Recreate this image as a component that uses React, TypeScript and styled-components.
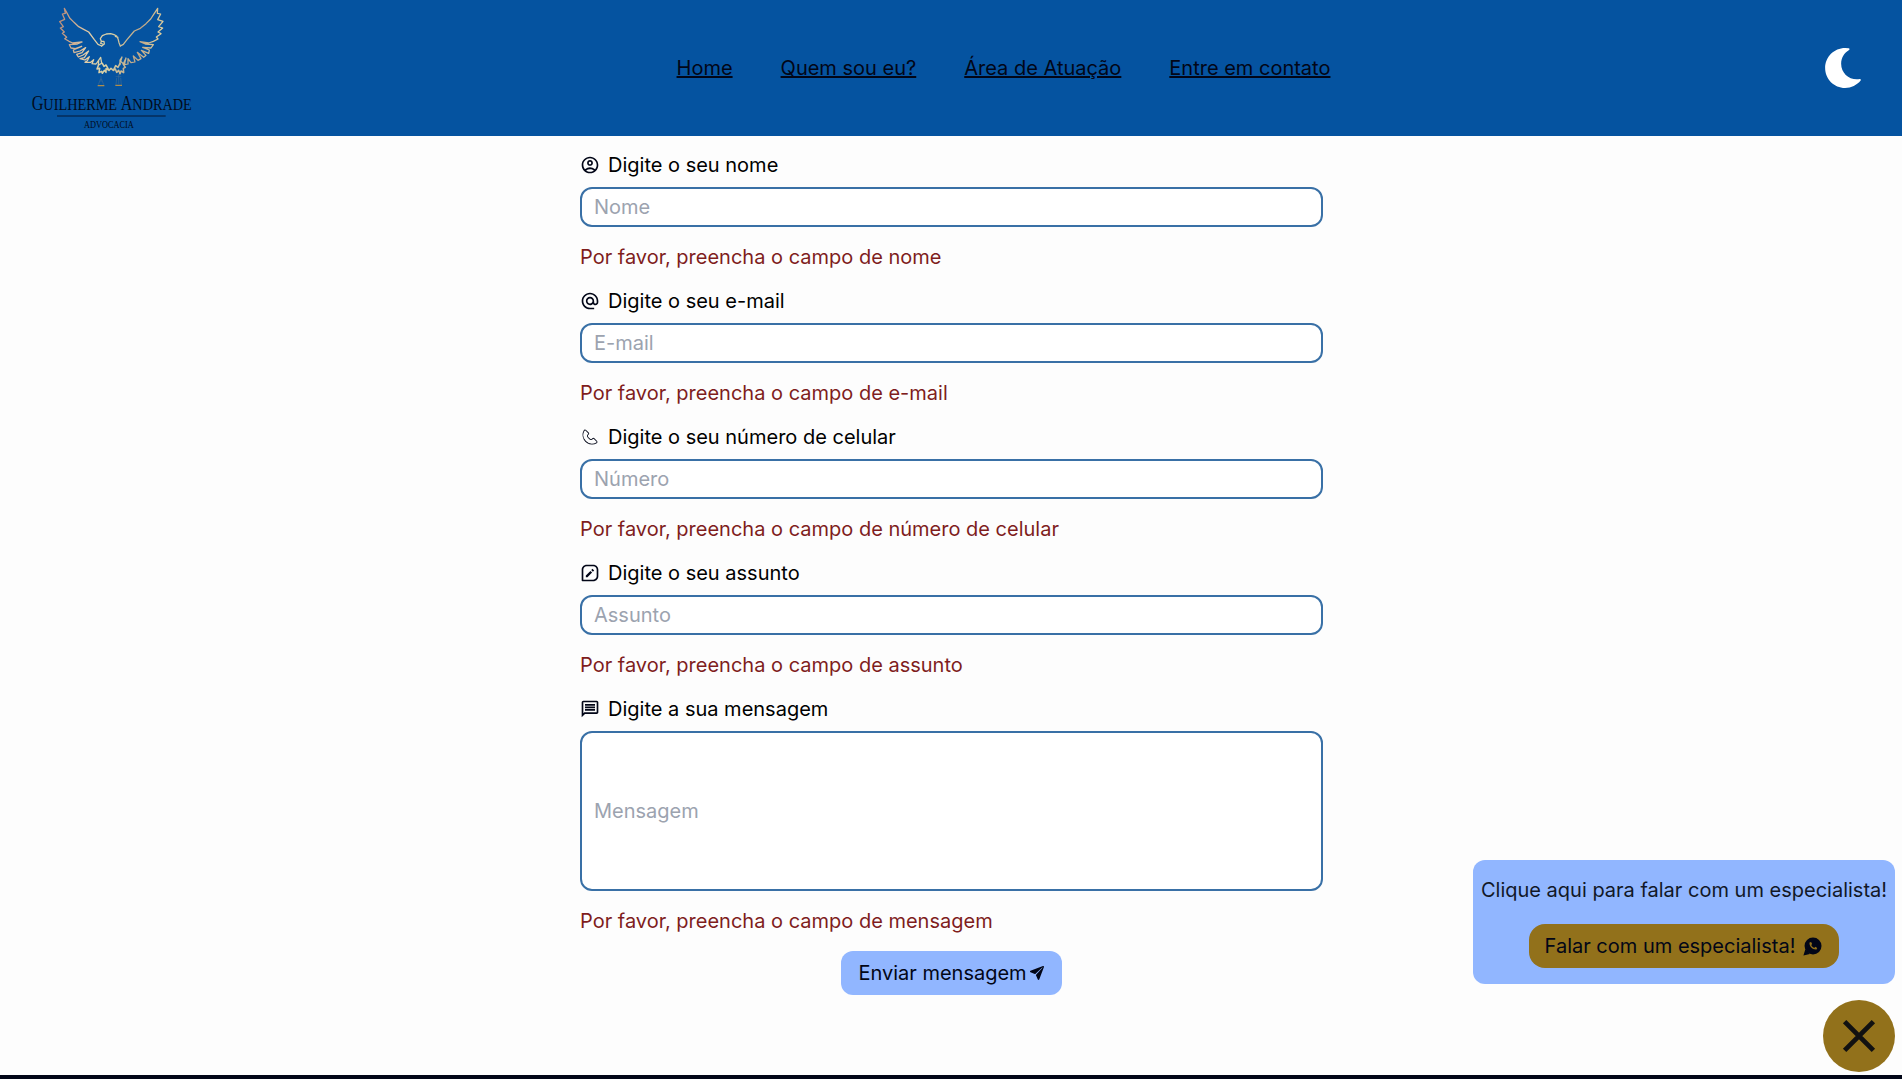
import React from "react";
import type { ComponentType } from "react";
import styled, { createGlobalStyle } from "styled-components";
import {
  MdOutlineAccountCircle,
  MdAlternateEmail,
  MdOutlineMessage,
} from "react-icons/md";
import { CiPhone } from "react-icons/ci";
import { BiMessageSquareEdit } from "react-icons/bi";
import { FaMoon } from "react-icons/fa";
import { IoPaperPlane } from "react-icons/io5";

const colors = {
  primary: "#0553a0",
  border: "#3970a6",
  light: "#91b6ff",
  gold: "#92711b",
  ink: "#020617",
  error: "#7f1d1d",
  placeholder: "#9ca3af",
  page: "#fdfdfd",
};

const GlobalStyle = createGlobalStyle`
  *, *::before, *::after { box-sizing: border-box; }
  html, body { height: 100%; }
  body {
    margin: 0;
    overflow: hidden;
    background: ${colors.page};
    color: #000;
    font-family: Inter, sans-serif;
    font-size: 20px;
    line-height: 28px;
  }
  button, input { font: inherit; color: inherit; }
`;

const Page = styled.div`
  display: flex;
  flex-direction: column;
  height: 1079px;
`;

const Header = styled.header`
  display: flex;
  align-items: center;
  justify-content: space-between;
  flex: none;
  height: 136px;
  padding: 0 31px 0 32px;
  background: ${colors.primary};
`;

const LogoArt = styled.svg`
  display: block;
  width: 160px;
  height: 136px;
  overflow: visible;
`;

const Nav = styled.nav`
  display: flex;
  gap: 48px;
`;

const NavLink = styled.a`
  color: ${colors.ink};
  text-decoration: underline;
`;

const ThemeButton = styled.button`
  display: flex;
  align-items: center;
  justify-content: center;
  width: 56px;
  height: 56px;
  padding: 0;
  border: 0;
  background: none;
  color: #fff;
  font-size: 40px;
`;

const Main = styled.main`
  flex: 1;
  padding-top: 15px;
`;

const Form = styled.form`
  display: flex;
  flex-direction: column;
  gap: 16px;
  width: 743px;
  margin-left: 580px;
`;

const Field = styled.div`
  display: flex;
  flex-direction: column;
  gap: 8px;
`;

const Label = styled.label`
  display: flex;
  align-items: center;
  gap: 8px;

  svg {
    width: 20px;
    height: 20px;
    color: ${colors.ink};
  }
`;

const Input = styled.input<{ $tall?: boolean }>`
  width: 100%;
  height: ${(p) => (p.$tall ? 160 : 40)}px;
  padding: 0 12px;
  border: 2px solid ${colors.border};
  border-radius: 12px;
  outline: 0;
  background: #fff;

  &::placeholder {
    color: ${colors.placeholder};
    opacity: 1;
  }
`;

const ErrorText = styled.p`
  margin: 8px 0 0;
  color: ${colors.error};
`;

const Submit = styled.button`
  display: flex;
  align-items: center;
  justify-content: center;
  align-self: center;
  width: 221px;
  height: 44px;
  padding: 0;
  border: 0;
  border-radius: 12px;
  background: ${colors.light};
  color: ${colors.ink};
  gap: 2px;

  svg {
    width: 16px;
    height: 16px;
  }
`;

const Footer = styled.footer`
  flex: none;
  height: 4px;
  background: ${colors.ink};
`;

const Floating = styled.aside`
  position: fixed;
  right: 7px;
  bottom: 7px;
  display: flex;
  flex-direction: column;
  align-items: flex-end;
  gap: 16px;
`;

const Card = styled.div`
  display: flex;
  flex-direction: column;
  align-items: center;
  gap: 20px;
  width: 422px;
  height: 124px;
  padding-top: 16px;
  border-radius: 12px;
  background: ${colors.light};
  color: #111827;
  white-space: nowrap;
`;

const Specialist = styled.button`
  display: flex;
  align-items: center;
  justify-content: center;
  gap: 7px;
  width: 310px;
  height: 44px;
  padding: 0;
  border: 0;
  border-radius: 16px;
  background: ${colors.gold};
  color: ${colors.ink};
`;

const WhatsappIcon = styled.svg`
  width: 21px;
  height: 21px;
`;

const Close = styled.button`
  display: flex;
  align-items: center;
  justify-content: center;
  width: 72px;
  height: 72px;
  padding: 0;
  border: 0;
  border-radius: 50%;
  background: ${colors.gold};
  color: #111;
`;

const leftWing =
  "M305 138 L294 133 L283 119 L266 96 L251 88 L236 80 L222 67 L209 54 L202 41 L193 25 L196 40 L187 42 L194 58 L179 65 L190 80 L181 84 L193 96 L187 100 L200 112 L194 116 L207 124 L218 129 L246 126 L232 132 L208 134 L213 144 L226 146 L245 139 L220 150 L222 158 L240 153 L257 143 L246 158 L230 163 L235 171 L249 165 L266 153 L253 173 L240 176 L255 180 L268 170 L262 182 L255 187 L272 187 L281 179 L276 191 L288 192 L302 172 L305 190 L295 195 L296 182";

const rightWing =
  "M361 138 L370 133 L381 119 L403 93 L421 85 L438 71 L452 57 L461 43 L473 25 L472 40 L482 42 L473 59 L489 64 L476 80 L488 84 L474 96 L483 101 L469 111 L474 117 L460 124 L446 129 L420 125 L436 132 L460 134 L453 144 L428 142 L448 150 L446 160 L424 151 L438 166 L431 172 L412 157 L423 176 L414 181 L400 168 L405 186 L393 188 L384 176 L384 192 L373 194 L378 174 L370 191 L362 184 L366 171 L360 180 L360 194";

const head =
  "M305 138 L313 132 L312 124 L304 124 L302 130 L308 132 M304 124 L301 116 L307 107 L319 102 L332 101 L342 104 L350 108 L354 116 L357 128 L361 138 M346 109 L354 112";

const claws =
  "M296 194 L291 207 L299 205 L297 218 L305 214 L307 220 L313 211 L318 217 L318 206 L327 211 L318 195 L312 199 L307 190 M327 211 L333 205 L340 211 L347 197 L354 202 L360 190 M340 211 L346 207 L350 217 L356 211 L360 221 L363 213 L371 218 L370 205 L376 202 L370 193";

function Logo() {
  return (
    <LogoArt viewBox="96 0 480 408" role="img">
      <defs>
        <linearGradient id="foil" gradientUnits="userSpaceOnUse" x1="178" y1="60" x2="490" y2="110">
          <stop offset="0" stopColor="#b98c79" />
          <stop offset=".3" stopColor="#e3cda9" />
          <stop offset=".5" stopColor="#d8d1a6" />
          <stop offset=".78" stopColor="#bda587" />
          <stop offset="1" stopColor="#e6d6a2" />
        </linearGradient>
      </defs>
      <g fill="none" stroke="url(#foil)" strokeWidth="3.8" strokeLinejoin="round" strokeLinecap="round">
        <path d={leftWing} />
        <path d={rightWing} />
        <path d={head} />
        <path d={claws} strokeWidth="4.6" />
      </g>
      <g fill="none">
        <path
          d="M303 228 V246 M302 236 L295 254 M304 236 L311 254 M356 222 V252 M347 230 H364 M350 234 L348 254 M362 234 L364 254"
          stroke="#4a7093"
          strokeWidth="1.6"
        />
        <path d="M293 257 H313 M346 256 H366" stroke="#b08d4b" strokeWidth="4" />
      </g>
      <g fill="#020c1c" fontFamily="'Liberation Serif', serif">
        <text transform="translate(95 330) scale(.809 1)" fontSize="53">
          <tspan fontSize="60">G</tspan>UILHERME <tspan fontSize="60">A</tspan>NDRADE
        </text>
        <text transform="translate(252 384) scale(.86 1)" fontSize="29">ADVOCACIA</text>
      </g>
      <path d="M171 348 H497" stroke="#062b58" strokeWidth="4.5" />
    </LogoArt>
  );
}

interface FieldInfo {
  icon: ComponentType;
  label: string;
  placeholder: string;
  error: string;
  tall?: boolean;
}

const fields: FieldInfo[] = [
  { icon: MdOutlineAccountCircle, label: "Digite o seu nome", placeholder: "Nome", error: "nome" },
  { icon: MdAlternateEmail, label: "Digite o seu e-mail", placeholder: "E-mail", error: "e-mail" },
  { icon: CiPhone, label: "Digite o seu número de celular", placeholder: "Número", error: "número de celular" },
  { icon: BiMessageSquareEdit, label: "Digite o seu assunto", placeholder: "Assunto", error: "assunto" },
  { icon: MdOutlineMessage, label: "Digite a sua mensagem", placeholder: "Mensagem", error: "mensagem", tall: true },
];

const links = ["Home", "Quem sou eu?", "Área de Atuação", "Entre em contato"];

export default function App() {
  return (
    <>
      <GlobalStyle />
      <Page>
        <Header>
          <Logo />
          <Nav>
            {links.map((l) => (
              <NavLink key={l} href="#">{l}</NavLink>
            ))}
          </Nav>
          <ThemeButton type="button">
            <FaMoon />
          </ThemeButton>
        </Header>
        <Main>
          <Form>
            {fields.map(({ icon: Icon, label, placeholder, error, tall }) => (
              <Field key={label}>
                <Label>
                  <Icon />
                  {label}
                </Label>
                <Input placeholder={placeholder} $tall={tall} />
                <ErrorText>Por favor, preencha o campo de {error}</ErrorText>
              </Field>
            ))}
            <Submit type="button">
              Enviar mensagem
              <IoPaperPlane />
            </Submit>
          </Form>
        </Main>
        <Footer />
      </Page>
      <Floating>
        <Card>
          <span>Clique aqui para falar com um especialista!</span>
          <Specialist type="button">
            Falar com um especialista!
            <WhatsappIcon viewBox="0 0 24 24">
              <circle cx="12.6" cy="11.4" r="9.7" fill="currentColor" />
              <path d="M1.6 22.4 L3.8 15 L9 20.6 Z" fill="currentColor" />
              <path
                d="M8.6 7.4 C8 11.6 11.8 15.8 16.6 15.4 L17.4 13.6 L15.2 12.4 L13.9 13.6 C12.4 13 11.2 11.8 10.6 10.4 L11.6 9.2 L10.4 6.8 Z"
                fill={colors.gold}
              />
            </WhatsappIcon>
          </Specialist>
        </Card>
        <Close type="button">
          <svg width="34" height="34" viewBox="0 0 34 34" fill="none" stroke="currentColor" strokeWidth="4.8">
            <path d="M2.6 2.6 L31.4 31.4 M31.4 2.6 L2.6 31.4" />
          </svg>
        </Close>
      </Floating>
    </>
  );
}
